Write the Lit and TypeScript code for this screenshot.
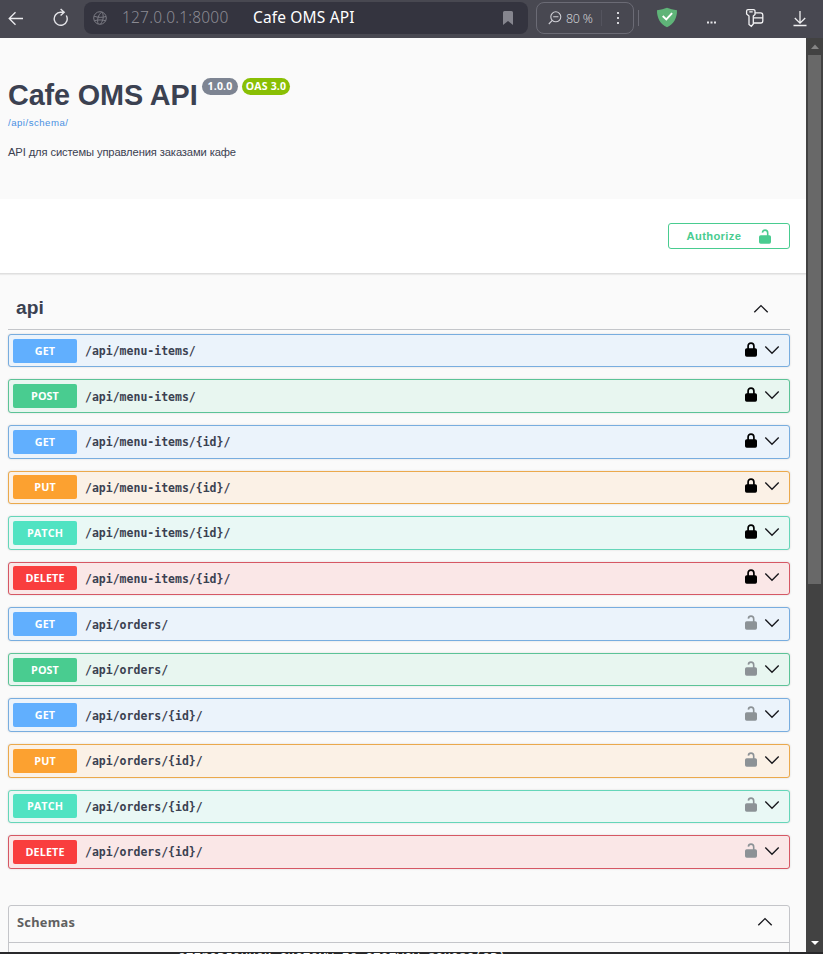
import { LitElement, html, css, svg } from "lit";
import { customElement, property } from "lit/decorators.js";

const chevron = (up: boolean) => html`<svg class="chev" width="16" height="10" viewBox="0 0 16 10">
  <path d=${up ? "M1.3 8.3 8 1.6l6.7 6.7" : "M1.3 1.6 8 8.3l6.7-6.7"} fill="none" stroke="#17171c" stroke-width="1.35"/>
</svg>`;

const padlock = (open: boolean) => html`<svg class="lock" width="12" height="15" viewBox="0 0 12 15">
  <rect x="0" y="6.2" width="12" height="8.6" rx="1.7" fill="currentColor"/>
  ${open
    ? svg`<path d="M3.4 3.6C3.5 1.900 4.600 1.100 6 1.100c1.600 0 2.700 1.100 2.700 2.900v3" fill="none" stroke="currentColor" stroke-width="1.6"/>`
    : svg`<path d="M3.100 7V4.100c0-2 1.200-3 2.900-3s2.900 1 2.900 3V7" fill="none" stroke="currentColor" stroke-width="1.700"/>`}
</svg>`;

@customElement("browser-bar")
class BrowserBar extends LitElement {
  static styles = css`
    :host { display: flex; height: 38px; background: #484851; align-items: flex-start; font-family: "Noto Sans", sans-serif; box-sizing: border-box; }
    svg { display: block; flex: none; }
    .back { margin: 10px 0 0 8px; }
    .reload { margin: 8px 0 0 29px; }
    .address { margin: 2px 0 0 15px; width: 444px; height: 32px; border-radius: 8px; background: #34343f; display: flex; align-items: center; box-sizing: border-box; padding-left: 9px; }
    .url { color: #8b8b93; font-size: 15.5px; font-weight: 300; line-height: 30px; height: 32px; margin-left: 15px; width: 131px; white-space: nowrap; letter-spacing: .2px; }
    .title { color: #fff; font-size: 15.5px; line-height: 30px; height: 32px; white-space: nowrap; width: 250px; letter-spacing: .15px; }
    .zoom { margin: 2px 0 0 8px; width: 98px; height: 32px; box-sizing: border-box; border: 1px solid #6b6b75; border-radius: 8px; display: flex; align-items: center; padding-left: 11px; color: #d0d0d5; font-size: 12.5px; font-weight: 300; }
    .pct { margin-left: 4px; width: 35px; white-space: nowrap; letter-spacing: -.3px; }
    .sep { width: 1px; height: 16px; background: #54545e; }
    .dots { margin-left: 14px; }
    .outer { margin: 10px 0 0 4px; background: #6b6b75; }
    .shield { margin: 7px 0 0 17px; }
    .more { margin: 21px 0 0 29px; }
    .keys { margin: 8px 0 0 29px; }
    .down { margin: 10px 0 0 28px; }
  `;
  render() {
    return html`
      <svg class="back" width="16" height="17" viewBox="0 0 16 17"><path d="M15 8.5H1.5M7.5 2.2 1.2 8.5l6.3 6.3" fill="none" stroke="#ececef" stroke-width="1.3"/></svg>
      <svg class="reload" width="16" height="20" viewBox="0 0 16 20"><path d="M13.300 7.500A6.500 6.500 0 1 1 7.500 4.300H11M7.600 1l3.600 3.300L7.600 7.600" fill="none" stroke="#e4e4e8" stroke-width="1.4"/></svg>
      <div class="address">
        <svg width="14" height="14" viewBox="0 0 14 14"><g fill="none" stroke="#7b7b84"><circle cx="7" cy="7" r="6.3"/><path d="M1 5.2c4 1.5 8.5 1.4 12 .3M1.3 9.7c3.5-1 8-1.1 11.6.1M8.7 1C5 4 4 8.700 5 13M9 1c2 3.500 1.600 8-1.400 12"/></g></svg>
        <span class="url">127.0.0.1:8000</span><span class="title">Cafe OMS API</span>
        <svg width="10" height="14" viewBox="0 0 10 14"><path d="M1.500 0h7a1.500 1.500 0 0 1 1.500 1.500V14L5 10 0 14V1.500A1.500 1.500 0 0 1 1.500 0z" fill="#85858e"/></svg>
      </div>
      <div class="zoom">
        <svg width="14" height="14" viewBox="0 0 14 14"><g fill="none" stroke="#cfcfd5" stroke-width="1.100"><circle cx="7.800" cy="5.800" r="5"/><path d="M4.300 9.400.8 13M5.200 5.800h5.200"/></g></svg>
        <span class="pct">80 %</span><i class="sep"></i>
        <svg class="dots" width="4" height="14" viewBox="0 0 4 14"><g fill="#d6d6da"><rect x="1" y="1" width="2" height="2"/><rect x="1" y="6" width="2" height="2"/><rect x="1" y="11" width="2" height="2"/></g></svg>
      </div>
      <i class="sep outer"></i>
      <svg class="shield" width="22" height="21" viewBox="0 0 22 21"><path d="M1 3.200C5 2.800 8 2 11 .8c3 1.200 6 2 10 2.400.2 8-3.500 14-10 17C4.500 17.200.8 11.200 1 3.200z" fill="#5fb478"/><path d="m6.700 9 3.600 3.500 5.800-6.300" fill="none" stroke="#fff" stroke-width="1.900"/></svg>
      <svg class="more" width="9" height="3" viewBox="0 0 9 3"><path d="M0 .5h2v2H0zM3.500.5h2v2h-2zM7 .5h2v2H7z" fill="#e6e6e9"/></svg>
      <svg class="keys" width="20" height="20" viewBox="0 0 20 20"><g fill="none" stroke="#f2f2f4" stroke-width="1.300"><path d="M3 1.600h5.500a1.500 1.500 0 0 1 1.500 1.500V6.500L8.300 8v8L6.300 18.300 4 16.500V8L1.600 6V3A1.500 1.500 0 0 1 3 1.600zM4.300 3.800h3.400"/><path d="M10 4.800h5.700A2.200 2.200 0 0 1 17.800 7v6a2 2 0 0 1-2 2H8.500M8.500 9.800H18"/></g></svg>
      <svg class="down" width="14" height="17" viewBox="0 0 14 17"><path d="M7 1v12M1.800 8 7 13.200 12.200 8M.5 15.500h13" fill="none" stroke="#f0f0f2" stroke-width="1.300"/></svg>
    `;
  }
}

@customElement("api-operation")
class ApiOperation extends LitElement {
  @property() method = "";
  @property() path = "";
  @property({ type: Boolean }) locked = false;
  static styles = css`
    :host { display: block; height: 33.57px; }
    .row { height: 100%; box-sizing: border-box; border: 1px solid var(--line); background: var(--tint); border-radius: 3px; display: flex; align-items: center; padding: 0 9px 0 4px; box-shadow: 0 0 2px rgba(0,0,0,.16); }
    .get { --line: #78addf; --fill: #61affe; --tint: #ebf3fb; }
    .post { --line: #5cc397; --fill: #49cc90; --tint: #e8f6f0; }
    .put { --line: #eba94c; --fill: #fca130; --tint: #fbf1e6; }
    .patch { --line: #65d6b9; --fill: #50e3c2; --tint: #e9f8f5; }
    .delete { --line: #d65764; --fill: #f93e3e; --tint: #fae7e7; }
    .badge { width: 64px; height: 24px; border-radius: 2px; background: var(--fill); color: #fff; font: 700 10.8px/23px "Open Sans", sans-serif; text-align: center; letter-spacing: .1px; }
    .path { flex: 1; margin-left: 8px; padding-top: 1px; color: #3b4151; font: 700 11.5px/20px "DejaVu Sans Mono", monospace; }
    svg { display: block; }
    .key { color: #8c9296; margin: -3px 7px 0 0; }
    .locked { color: #000; }
    .arrow { margin-top: -2px; }
  `;
  render() {
    return html`<div class="row ${this.method.toLowerCase()}">
      <span class="badge">${this.method}</span><span class="path">${this.path}</span>
      <span class="key ${this.locked ? "locked" : ""}">${padlock(!this.locked)}</span>
      <span class="arrow">${chevron(false)}</span>
    </div>`;
  }
}

const METHODS_ALL = ["GET", "POST"];
const METHODS_ONE = ["GET", "PUT", "PATCH", "DELETE"];
const OPERATIONS = ["menu-items", "orders"].flatMap((name) => [
  ...METHODS_ALL.map((method) => ({ method, path: `/api/${name}/`, locked: name === "menu-items" })),
  ...METHODS_ONE.map((method) => ({ method, path: `/api/${name}/{id}/`, locked: name === "menu-items" })),
]);

@customElement("app-root")
class AppRoot extends LitElement {
  static styles = css`
    :host { display: flex; flex-direction: column; height: 954px; overflow: hidden; background: #fafafa; color: #3b4151; font-family: "Liberation Sans", Arial, sans-serif; }
    svg { display: block; }
    .view { display: flex; height: 914px; flex: none; overflow: hidden; }
    .page { flex: 1; overflow: hidden; background: #fafafa; }
    .info { height: 161px; box-sizing: border-box; padding: 40px 8px 0; }
    .heading { display: flex; height: 34px; }
    h1 { margin: 0; font-size: 28.8px; line-height: 34px; width: 194px; white-space: nowrap; letter-spacing: -.12px; }
    .pill { height: 17px; border-radius: 9px; background: #7d8492; color: #fff; font: 700 10.5px/17px "Open Sans", sans-serif; text-align: center; width: 36px; letter-spacing: .2px; }
    .oas { background: #89bf04; width: 48px; margin-left: 4px; }
    .schema { font-size: 9.6px; line-height: 12px; color: #4990e2; margin-top: 5px; letter-spacing: .5px; }
    .about { font-size: 11.2px; line-height: 14px; margin-top: 16px; letter-spacing: -.12px; }
    .auth { height: 75px; background: #fff; border-bottom: 1px solid #dfdfdf; box-shadow: 0 1px 1px rgba(0,0,0,.06); display: flex; justify-content: flex-end; padding: 24px 16px 0 0; box-sizing: border-box; }
    .authorize { width: 122px; height: 26px; box-sizing: border-box; border: 1px solid #49cc90; border-radius: 3px; color: #49cc90; display: flex; align-items: center; justify-content: space-between; padding: 0 18px 0 17.5px; font: 700 11.2px "Liberation Sans", sans-serif; letter-spacing: .36px; }
    .list { padding: 0 16px 0 8px; }
    .tag { height: 56px; box-sizing: border-box; border-bottom: 1px solid #c4c6ca; display: flex; justify-content: space-between; padding: 22px 21px 0 8px; margin-bottom: 3.9px; }
    h2 { margin: 0; font-size: 19.2px; line-height: 24px; }
    .tag svg { margin-top: 8px; }
    .ops { display: flex; flex-direction: column; gap: 12px; }
    .schemas { margin-top: 36px; height: 80px; border: 1px solid #c4c5c9; border-radius: 3px; }
    .schead { display: flex; justify-content: space-between; align-items: center; height: 36px; box-sizing: border-box; padding: 0 16px 3px 8px; font: 700 12.8px "Noto Sans", sans-serif; color: #606060; letter-spacing: .3px; }
    .schbody { border-top: 1px solid #c4c5c9; }
    .scroll { width: 17px; background: #424242; display: flex; flex-direction: column; align-items: center; justify-content: space-between; }
    .thumbwrap { display: flex; flex-direction: column; align-items: center; }
    .thumb { width: 13px; height: 529px; background: #686868; margin-top: 6px; }
    .up { margin-top: 6px; }
    .dn { margin-bottom: 7px; }
    .strip { height: 2px; overflow: hidden; background: #29292b; color: #fff; font: 13px/15px "Liberation Mono", monospace; padding-left: 178px; white-space: nowrap; }
    .strip span { display: block; margin-top: -3px; }
  `;
  render() {
    return html`
      <browser-bar></browser-bar>
      <div class="view">
        <main class="page">
          <section class="info">
            <div class="heading"><h1>Cafe OMS API</h1><span class="pill">1.0.0</span><span class="pill oas">OAS 3.0</span></div>
            <div class="schema">/api/schema/</div>
            <div class="about">API для системы управления заказами кафе</div>
          </section>
          <section class="auth"><div class="authorize"><span>Authorize</span>${padlock(true)}</div></section>
          <section class="list">
            <div class="tag"><h2>api</h2>${chevron(true)}</div>
            <div class="ops">
              ${OPERATIONS.map((o) => html`<api-operation .method=${o.method} .path=${o.path} .locked=${o.locked}></api-operation>`)}
            </div>
            <div class="schemas"><div class="schead"><span>Schemas</span>${chevron(true)}</div><div class="schbody"></div></div>
          </section>
        </main>
        <aside class="scroll">
          <div class="thumbwrap"><svg class="up" width="8" height="5"><path d="M0 5 4 0.500 8 5z" fill="#858585"/></svg><div class="thumb"></div></div>
          <svg class="dn" width="8" height="4"><path d="M0 0h8L4 4z" fill="#fff"/></svg>
        </aside>
      </div>
      <div class="strip"><span>отправленной системы по статусу заказа(ов)</span></div>
    `;
  }
}
